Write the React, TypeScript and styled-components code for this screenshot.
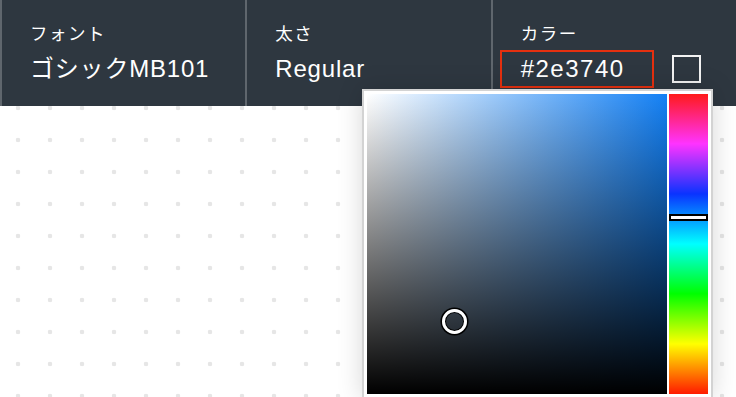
import React from 'react';
import styled, { createGlobalStyle } from 'styled-components';

const GlobalStyle = createGlobalStyle`
  html, body {
    margin: 0;
    padding: 0;
    height: 100%;
  }
  body {
    background-color: #ffffff;
    background-image: radial-gradient(circle, #e6e6e6 2px, transparent 2.6px);
    background-size: 32px 32px;
    background-position: 2px -4px;
    font-family: "Liberation Sans", "Noto Sans CJK JP", sans-serif;
    overflow: hidden;
  }
`;

const fields = [
  { label: 'フォント', value: 'ゴシックMB101' },
  { label: '太さ', value: 'Regular' },
];

const App = () => {
  return (
    <Page>
      <GlobalStyle />
      <Toolbar>
        {fields.map((f) => (
          <Cell key={f.label}>
            <Label>{f.label}</Label>
            <Value>{f.value}</Value>
          </Cell>
        ))}
        <Cell>
          <Label>カラー</Label>
          <ColorRow>
            <ColorInput>#2e3740</ColorInput>
            <Swatch $color="#2e3740" />
          </ColorRow>
        </Cell>
      </Toolbar>

      <Picker>
        <SatVal $hue={211}>
          <Cursor style={{ left: '29%', top: '75.5%' }} />
        </SatVal>
        <HueBar>
          <HueThumb style={{ top: `${((360 - 211) / 360) * 100}%` }} />
        </HueBar>
      </Picker>
    </Page>
  );
};

const Page = styled.div`
  position: relative;
  width: 736px;
  height: 397px;
`;

const Toolbar = styled.div`
  display: grid;
  grid-template-columns: repeat(3, 1fr);
  height: 106px;
  background-color: #2e3740;
  color: #ffffff;
`;

const Cell = styled.div`
  display: flex;
  flex-direction: column;
  gap: 6px;
  padding: 22px 0 0 28px;
  border-left: 2px solid #5f666d;
`;

const Label = styled.div`
  font-family: "Noto Sans CJK JP", sans-serif;
  font-size: 17.5px;
  line-height: 22px;
  letter-spacing: 1.5px;
`;

const Value = styled.div`
  font-family: "Liberation Sans", "Noto Sans CJK JP", sans-serif;
  font-size: 24px;
  line-height: 38px;
  letter-spacing: 0.8px;
`;

const ColorRow = styled.div`
  display: flex;
  align-items: center;
  gap: 18px;
`;

const ColorInput = styled(Value)`
  box-sizing: border-box;
  width: 154px;
  height: 38px;
  margin-left: -21px;
  padding-left: 19px;
  line-height: 34px;
  letter-spacing: 1.5px;
  border: 2px solid #e5300f;
`;

const Swatch = styled.div<{ $color: string }>`
  box-sizing: border-box;
  width: 29px;
  height: 28px;
  border: 2px solid #f2f2f2;
  background-color: ${(p) => p.$color};
`;

const Picker = styled.div`
  position: absolute;
  left: 362px;
  top: 89px;
  display: flex;
  gap: 2px;
  padding: 3px;
  background: #ffffff;
  border: 2px solid #d3d3d3;
  box-shadow: 0 0 24px rgba(0, 0, 0, 0.16);
`;

const SatVal = styled.div<{ $hue: number }>`
  position: relative;
  width: 300px;
  height: 300px;
  background:
    linear-gradient(to top, #000000, rgba(0, 0, 0, 0)),
    linear-gradient(to right, #ffffff, hsl(${(p) => p.$hue}, 92%, 52%));
`;

const Cursor = styled.div`
  position: absolute;
  width: 19px;
  height: 19px;
  margin: -12px 0 0 -12px;
  border: 3px solid #ffffff;
  border-radius: 50%;
  box-shadow: 0 0 0 1.5px #000000, inset 0 0 0 1px #000000;
`;

const HueBar = styled.div`
  position: relative;
  width: 39px;
  height: 300px;
  background: linear-gradient(
    to bottom,
    #ff1a1a 0%,
    #ff33ff 16.6%,
    #0a33ff 33.3%,
    #00ffff 50%,
    #00ff00 66.6%,
    #ffff00 83.3%,
    #ff1a00 100%
  );
`;

const HueThumb = styled.div`
  position: absolute;
  left: 0;
  right: 0;
  height: 3px;
  margin-top: -4px;
  background: #ffffff;
  border: 2px solid #000000;
`;

export default App;
